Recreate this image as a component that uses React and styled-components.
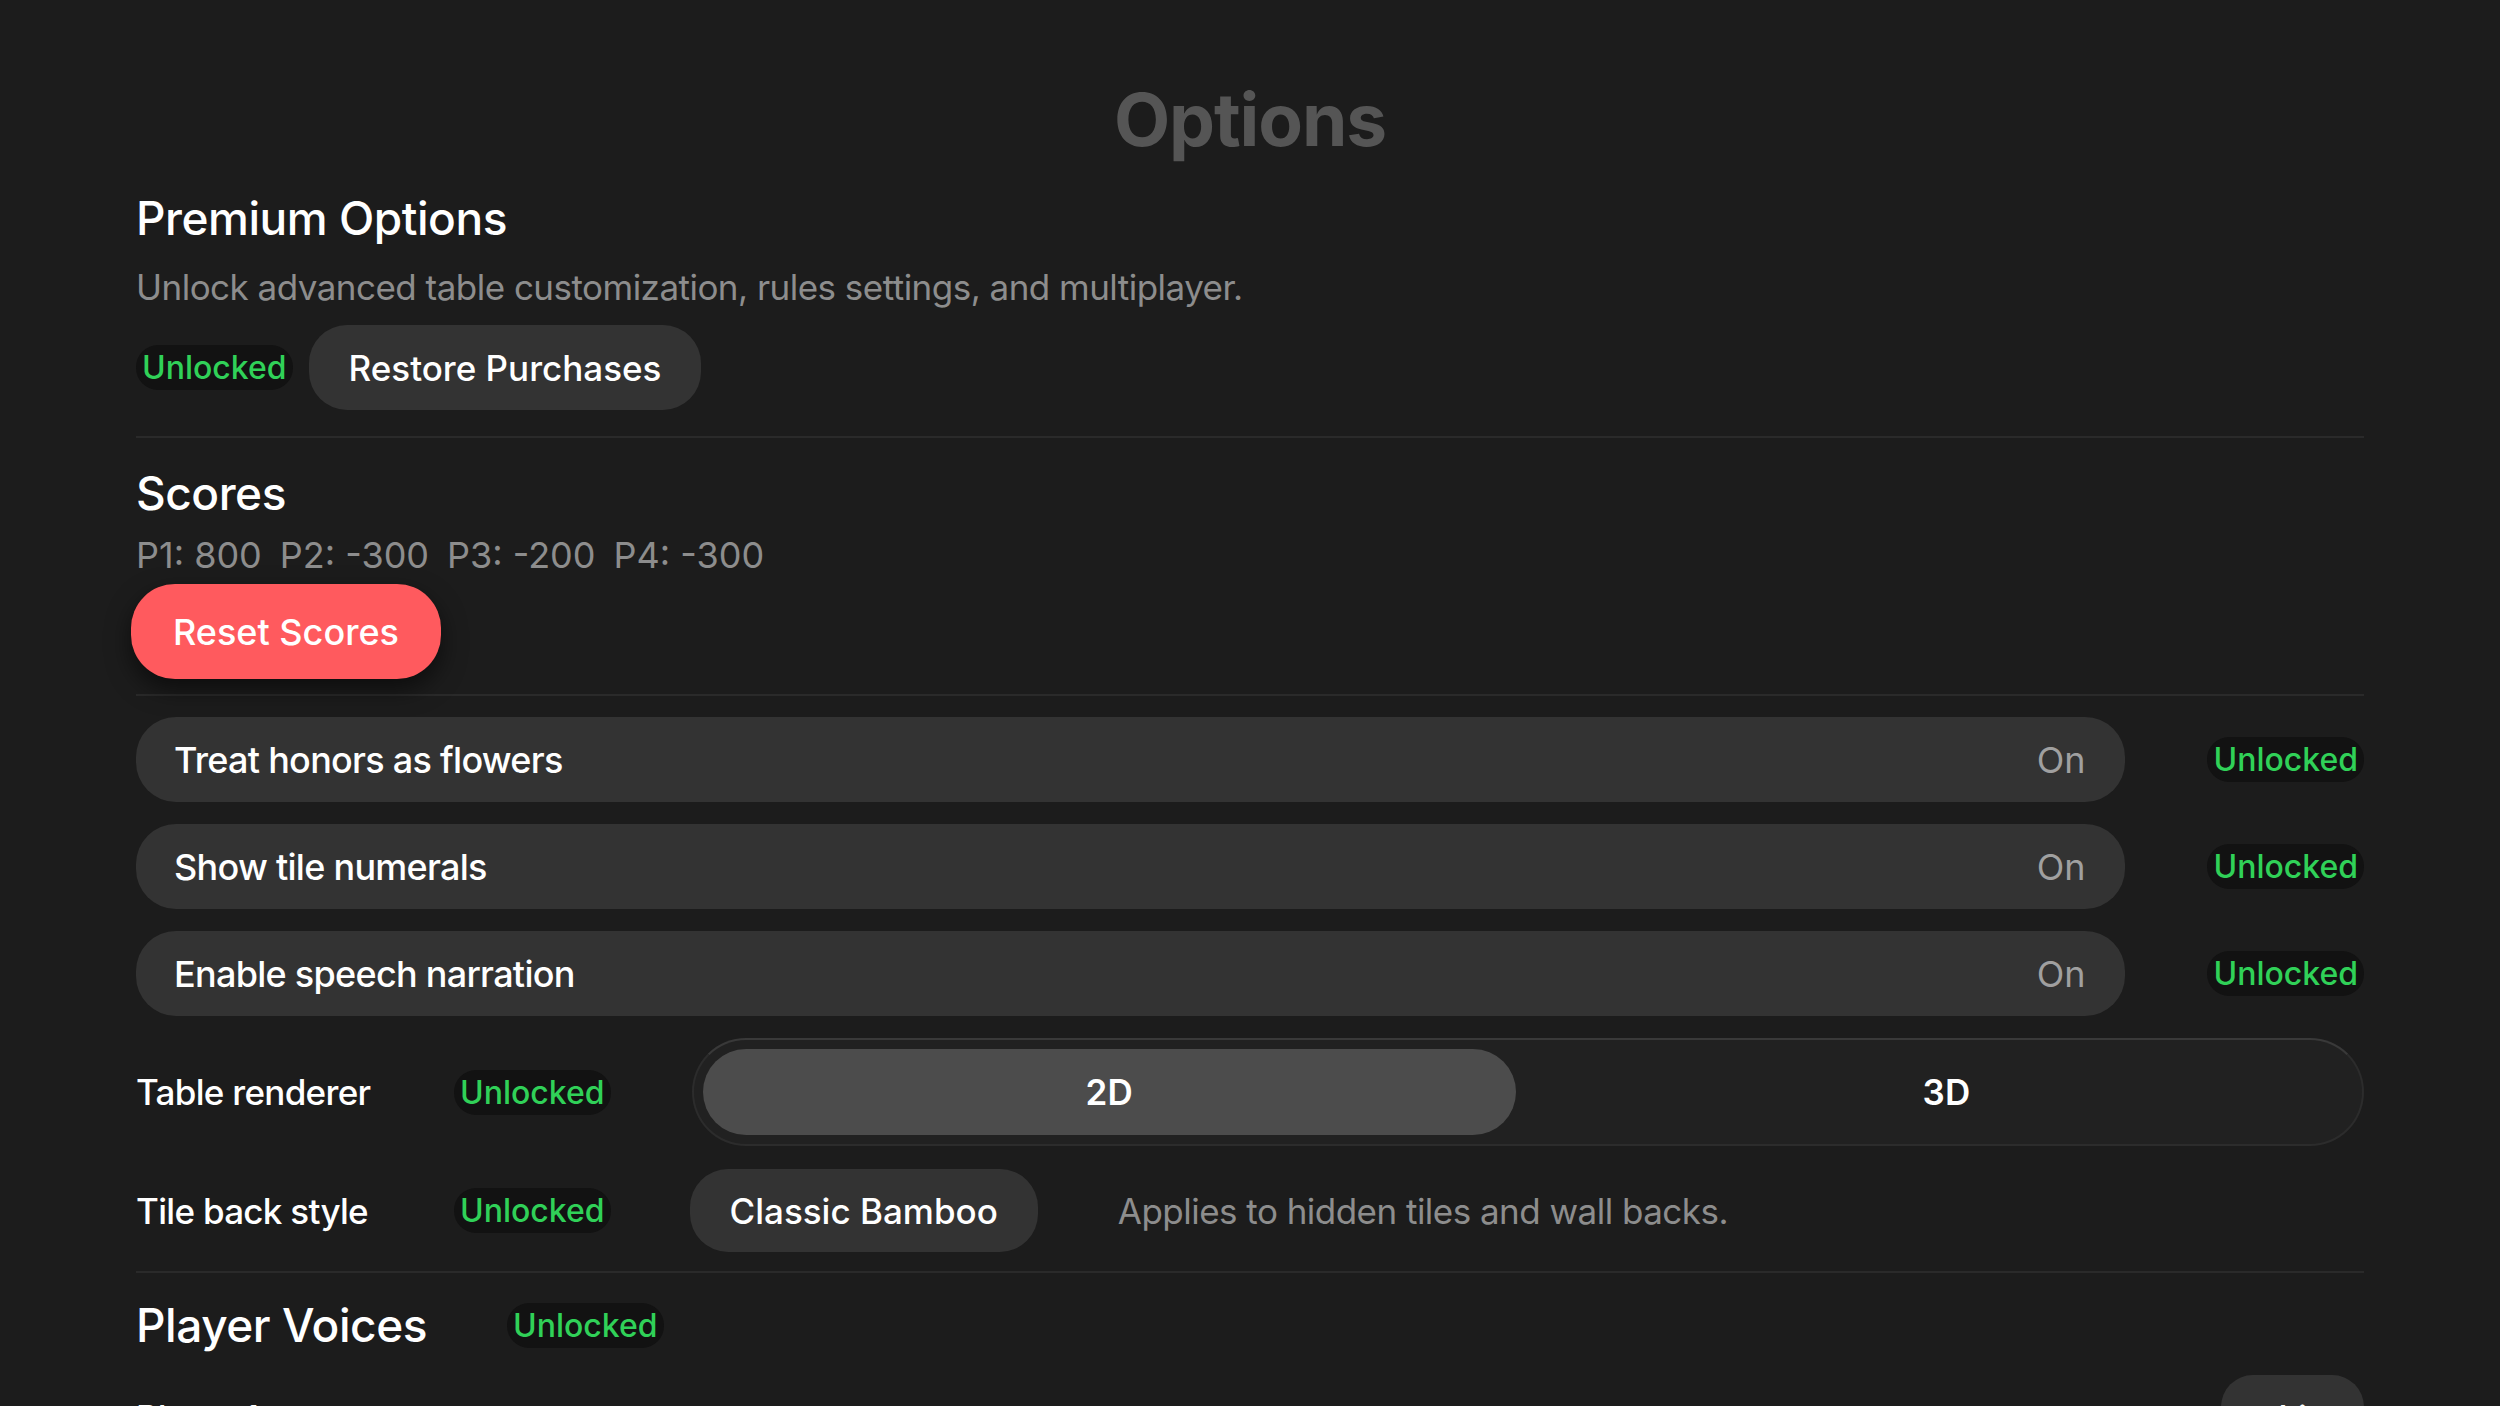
import React from "react"
import styled, { createGlobalStyle } from "styled-components"

const GlobalStyle = createGlobalStyle`
  html, body {
    margin: 0;
    padding: 0;
    background: #1c1c1c;
  }
  body {
    font-family: Inter, "Noto Sans", sans-serif;
    -webkit-font-smoothing: antialiased;
  }
`

const Page = styled.main`
  box-sizing: border-box;
  height: 1406px;
  overflow: hidden;
  padding: 77px 136px 0;
  background: #1c1c1c;
  color: #fff;
`

const Title = styled.h1`
  margin: 0;
  text-align: center;
  font-size: 73px;
  line-height: 86px;
  font-weight: 700;
  letter-spacing: -0.015em;
  color: #555555;
`

const Heading = styled.h2`
  margin: ${({ $top }) => $top || 0}px 0 0;
  font-size: 46px;
  line-height: 56px;
  font-weight: 500;
  letter-spacing: -0.01em;
  color: #ffffff;
`

const Muted = styled.p`
  margin: ${({ $top }) => $top || 0}px 0 0;
  font-size: 35px;
  line-height: 42px;
  letter-spacing: -0.015em;
  color: #8d8d8d;
  display: flex;
  gap: ${({ $gap }) => $gap || 0}px;
`

const ScoreLine = styled(Muted)`
  font-size: 36px;
  letter-spacing: 0;
`

const Row = styled.div`
  display: flex;
  align-items: center;
  gap: ${({ $gap }) => $gap || 0}px;
  margin-top: ${({ $top }) => $top || 0}px;
`

const Divider = styled.hr`
  margin: ${({ $top }) => $top}px 0 0;
  border: 0;
  height: 2px;
  background: #2a2a2a;
`

const Badge = styled.span`
  display: inline-flex;
  align-items: center;
  flex-shrink: 0;
  height: 45px;
  padding: 0 6px;
  border-radius: 22px;
  background: #121212;
  color: #30d158;
  font-size: 32px;
  font-weight: 500;
`

const PillButton = styled.button`
  flex-shrink: 0;
  height: ${({ $h }) => $h || 85}px;
  margin-left: ${({ $left }) => $left || 0}px;
  padding: 0 40px;
  border: 0;
  border-radius: 38px;
  background: #333333;
  color: #ffffff;
  font-family: inherit;
  font-size: 35px;
  font-weight: 500;
`

const DangerButton = styled(PillButton)`
  height: 95px;
  padding: 0 42px;
  margin-top: 8px;
  margin-left: -5px;
  border-radius: 44px;
  background: #ff5a5e;
  font-size: 36px;
  box-shadow: 0 10px 24px rgba(0, 0, 0, 0.55);
`

const ToggleList = styled.div`
  display: flex;
  flex-direction: column;
  gap: 22px;
  margin-top: 21px;
`

const ToggleBar = styled.div`
  flex: 1;
  display: flex;
  align-items: center;
  justify-content: space-between;
  height: 85px;
  padding: 0 40px 0 38px;
  border-radius: 40px;
  background: #333333;
  font-size: 36px;
`

const ToggleLabel = styled.span`
  font-weight: 500;
  letter-spacing: -0.02em;
  color: #ffffff;
`

const ToggleValue = styled.span`
  color: #a0a0a0;
`

const SettingLabel = styled.span`
  width: 318px;
  flex-shrink: 0;
  font-size: 35px;
  font-weight: 500;
  letter-spacing: -0.02em;
  color: #ffffff;
`

const Segmented = styled.div`
  flex: 1;
  box-sizing: border-box;
  height: 108px;
  margin-left: 81px;
  padding: 9px;
  display: grid;
  grid-template-columns: 1fr 1fr;
  gap: 24px;
  border: 2px solid #2c2c2c;
  border-top-color: #393939;
  border-radius: 54px;
  background: #212121;
`

const Segment = styled.div`
  display: flex;
  align-items: center;
  justify-content: center;
  border-radius: 44px;
  background: ${({ $active }) => ($active ? "#4c4c4c" : "transparent")};
  font-size: 35px;
  font-weight: 600;
  color: #ffffff;
`

const Note = styled.span`
  margin-left: 80px;
  font-size: 35px;
  letter-spacing: -0.015em;
  color: #8d8d8d;
`

const PlayerRow = styled.div`
  display: flex;
  align-items: center;
  justify-content: space-between;
  margin-top: 22px;
  height: 85px;
`

const PickerButton = styled(PillButton)`
  width: 143px;
  padding: 0;
  border-radius: 32px;
`

const toggles = ["Treat honors as flowers", "Show tile numerals", "Enable speech narration"]
const scores = ["P1: 800", "P2: -300", "P3: -200", "P4: -300"]

export default function App() {
  return (
    <>
      <GlobalStyle />
      <Page>
        <Title>Options</Title>

        <Heading $top={27}>Premium Options</Heading>
        <Muted $top={20}>Unlock advanced table customization, rules settings, and multiplayer.</Muted>
        <Row $gap={16} $top={17}>
          <Badge>Unlocked</Badge>
          <PillButton>Restore Purchases</PillButton>
        </Row>
        <Divider $top={26} />

        <Heading $top={27}>Scores</Heading>
        <ScoreLine $top={13} $gap={18}>
          {scores.map((s) => (
            <span key={s}>{s}</span>
          ))}
        </ScoreLine>
        <DangerButton>Reset Scores</DangerButton>
        <Divider $top={15} />

        <ToggleList>
          {toggles.map((t) => (
            <Row key={t} $gap={82}>
              <ToggleBar>
                <ToggleLabel>{t}</ToggleLabel>
                <ToggleValue>On</ToggleValue>
              </ToggleBar>
              <Badge>Unlocked</Badge>
            </Row>
          ))}
        </ToggleList>

        <Row $top={22}>
          <SettingLabel>Table renderer</SettingLabel>
          <Badge>Unlocked</Badge>
          <Segmented>
            <Segment $active>2D</Segment>
            <Segment>3D</Segment>
          </Segmented>
        </Row>

        <Row $top={23}>
          <SettingLabel>Tile back style</SettingLabel>
          <Badge>Unlocked</Badge>
          <PillButton $h={83} $left={79}>Classic Bamboo</PillButton>
          <Note>Applies to hidden tiles and wall backs.</Note>
        </Row>
        <Divider $top={19} />

        <Row $gap={80} $top={24}>
          <Heading>Player Voices</Heading>
          <Badge>Unlocked</Badge>
        </Row>

        <PlayerRow>
          <SettingLabel>Player 1</SettingLabel>
          <PickerButton>Li</PickerButton>
        </PlayerRow>
      </Page>
    </>
  )
}
